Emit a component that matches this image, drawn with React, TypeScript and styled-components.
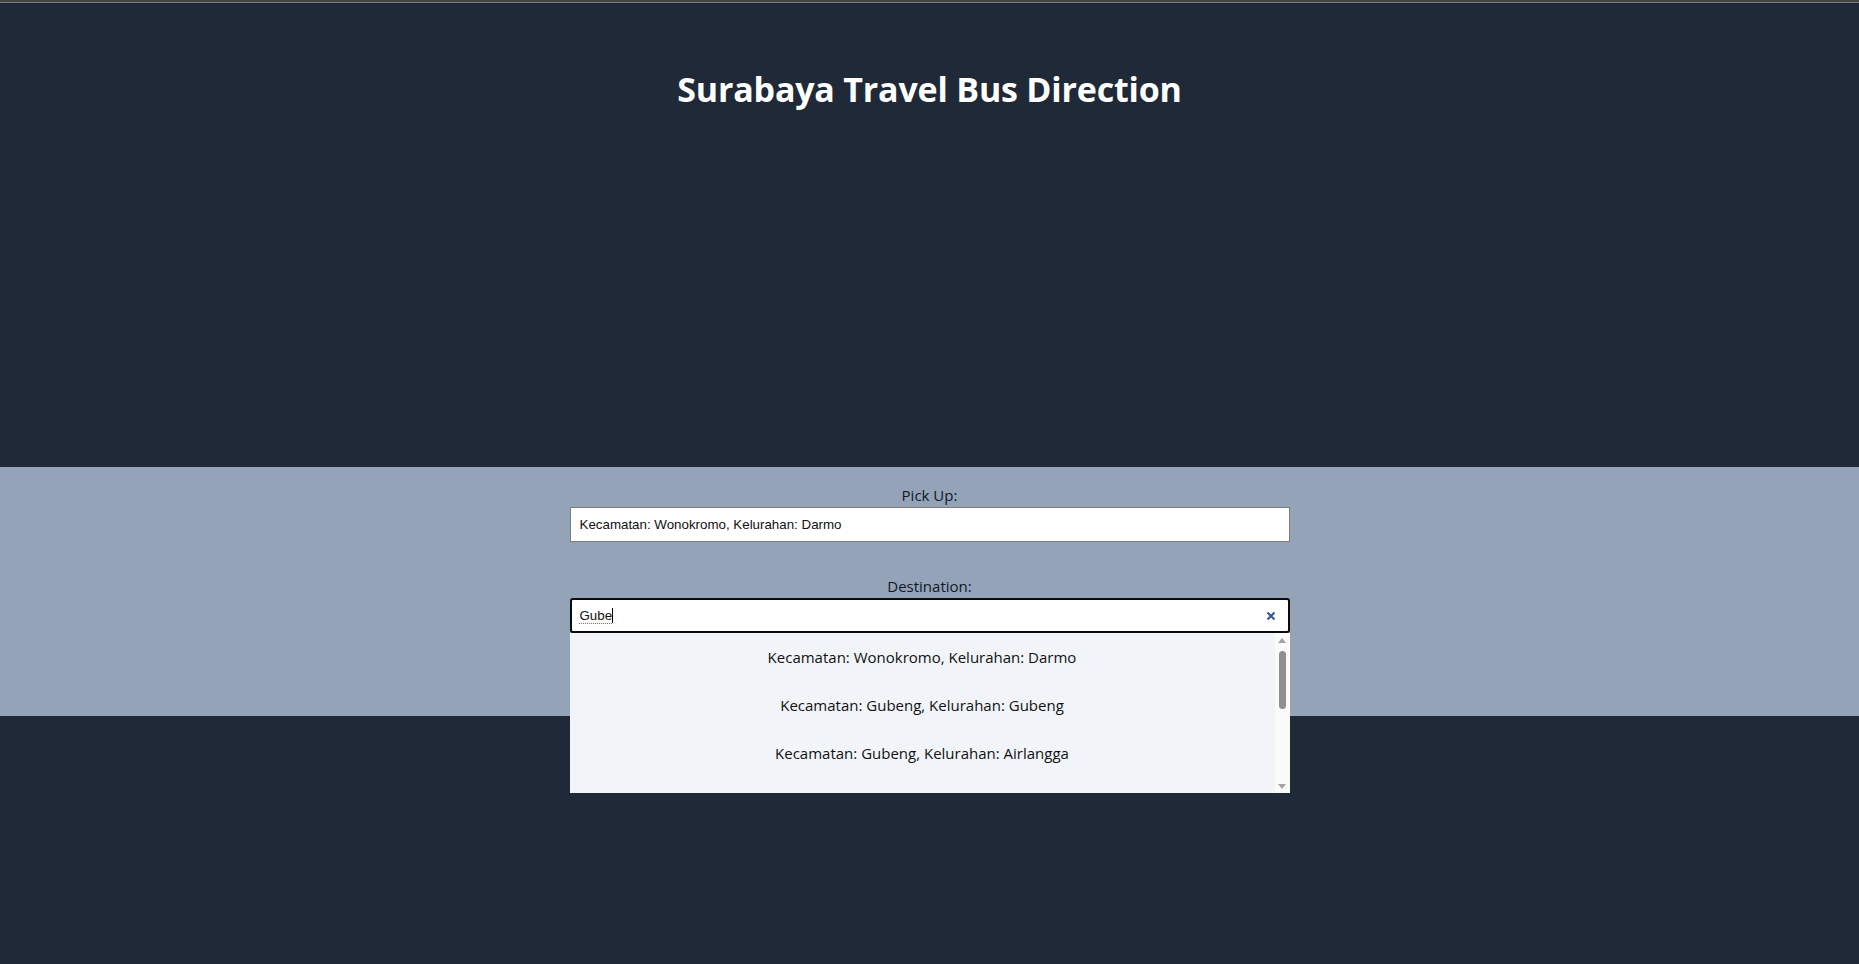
import React from "react";
import styled, { createGlobalStyle } from "styled-components";

const GlobalStyle = createGlobalStyle`
  html, body {
    margin: 0;
    padding: 0;
    background: #1f2937;
  }
  body {
    font-family: "Open Sans", "Noto Sans", sans-serif;
    min-height: 964px;
  }
  * { box-sizing: border-box; }
`;

const Page = styled.div`
  min-height: 964px;
  background: #1f2937;
  display: flex;
  flex-direction: column;
`;

const TopEdge = styled.div`
  height: 3px;
  border-top: 2px solid #444444;
  background: #7e7e7e;
`;

const Hero = styled.header`
  height: 464px;
  display: flex;
  justify-content: center;
  padding-top: 64px;
`;

const Title = styled.h1`
  margin: 0;
  color: #ffffff;
  font-family: "Open Sans", "Noto Sans", sans-serif;
  font-weight: 700;
  font-size: 34px;
  line-height: 44px;
  letter-spacing: -0.2px;
`;

const Band = styled.section`
  height: 249px;
  background: #94a3b8;
  display: flex;
  flex-direction: column;
  align-items: center;
  padding-top: 18px;
`;

const Field = styled.div<{ $gap?: number }>`
  width: 720px;
  display: flex;
  flex-direction: column;
  align-items: center;
  margin-top: ${(p) => p.$gap ?? 0}px;
  position: relative;
`;

const Label = styled.label`
  font-family: "Open Sans", "Noto Sans", sans-serif;
  font-size: 15px;
  line-height: 21px;
  color: #111827;
  margin-bottom: 1px;
`;

const TextBox = styled.div<{ $focused?: boolean }>`
  width: 100%;
  height: 35px;
  background: #ffffff;
  display: flex;
  align-items: center;
  padding: 0 11px 0 ${(p) => (p.$focused ? 8 : 9)}px;
  border: ${(p) => (p.$focused ? "2px solid #0b0b0b" : "1px solid #7b7b7b")};
  border-radius: ${(p) => (p.$focused ? "3px" : "0")};
  font-family: "Liberation Sans", Arial, sans-serif;
  font-size: 13.333px;
  color: #111111;
`;

const Value = styled.span`
  flex: 1;
  white-space: nowrap;
`;

const Misspelled = styled.span`
  text-decoration: underline dotted #d9534f;
  text-decoration-thickness: 1px;
  text-underline-offset: 3px;
`;

const Caret = styled.span`
  display: inline-block;
  width: 1px;
  height: 15px;
  background: #000;
  vertical-align: -3px;
`;

const ClearButton = styled.button`
  border: none;
  background: transparent;
  padding: 0;
  margin: 0;
  width: 12px;
  height: 12px;
  display: flex;
  align-items: center;
  justify-content: center;
  color: #3b5a8c;
  cursor: pointer;
`;

const Dropdown = styled.div`
  position: absolute;
  top: 100%;
  left: 0;
  width: 720px;
  height: 160px;
  background: #f1f5f9;
  display: flex;
  z-index: 2;
`;

const OptionList = styled.ul`
  list-style: none;
  margin: 0;
  padding: 0;
  flex: 1;
  overflow: hidden;
`;

const Option = styled.li`
  height: 48px;
  display: flex;
  align-items: center;
  justify-content: center;
  font-family: "Open Sans", "Noto Sans", sans-serif;
  font-size: 15px;
  color: #111111;
`;

const ScrollTrack = styled.div`
  width: 15px;
  background: #fafafa;
  display: flex;
  flex-direction: column;
  align-items: center;
  padding: 5px 0 4px;
`;

const Arrow = styled.div<{ $down?: boolean }>`
  width: 0;
  height: 0;
  border-left: 4px solid transparent;
  border-right: 4px solid transparent;
  ${(p) =>
    p.$down
      ? "border-top: 5px solid #a3a3a3; margin-top: auto;"
      : "border-bottom: 5px solid #a3a3a3;"}
`;

const Thumb = styled.div`
  width: 7px;
  height: 58px;
  margin-top: 8px;
  border-radius: 4px;
  background: #8f8f8f;
`;

const options = [
  "Kecamatan: Wonokromo, Kelurahan: Darmo",
  "Kecamatan: Gubeng, Kelurahan: Gubeng",
  "Kecamatan: Gubeng, Kelurahan: Airlangga",
];

export default function App() {
  return (
    <Page>
      <GlobalStyle />
      <TopEdge />
      <Hero>
        <Title>Surabaya Travel Bus Direction</Title>
      </Hero>
      <Band>
        <Field>
          <Label>Pick Up:</Label>
          <TextBox>
            <Value>Kecamatan: Wonokromo, Kelurahan: Darmo</Value>
          </TextBox>
        </Field>
        <Field $gap={34}>
          <Label>Destination:</Label>
          <TextBox $focused>
            <Value>
              <Misspelled>Gube</Misspelled>
              <Caret />
            </Value>
            <ClearButton aria-label="Clear">
              <svg width="10" height="10" viewBox="0 0 10 10">
                <path
                  d="M1.5 1.5 L8.5 8.5 M8.5 1.5 L1.5 8.5"
                  stroke="currentColor"
                  strokeWidth="2.2"
                  strokeLinecap="butt"
                />
              </svg>
            </ClearButton>
          </TextBox>
          <Dropdown>
            <OptionList>
              {options.map((o) => (
                <Option key={o}>{o}</Option>
              ))}
            </OptionList>
            <ScrollTrack>
              <Arrow />
              <Thumb />
              <Arrow $down />
            </ScrollTrack>
          </Dropdown>
        </Field>
      </Band>
    </Page>
  );
}
